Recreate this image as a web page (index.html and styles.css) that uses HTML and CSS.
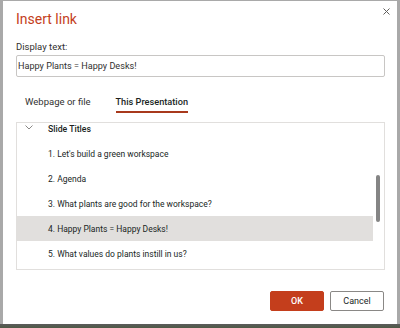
FILE: index.html
```html
<!DOCTYPE html>
<html>
<head>
<meta charset="utf-8">
<link rel="stylesheet" href="styles.css">
</head>
<body>
<div class="screen">
  <div class="dialog">
    <div class="head">
      <h1 class="title">Insert link</h1>
      <button class="close" aria-label="Close">
        <svg width="7" height="7" viewBox="0 0 7 7"><path d="M0.5 0.5L6.5 6.5M6.5 0.5L0.5 6.5" stroke="#605e5c" stroke-width="1" fill="none"/></svg>
      </button>
    </div>
    <div class="label">Display text:</div>
    <div class="input">Happy Plants = Happy Desks!</div>
    <div class="tabs">
      <span class="tab">Webpage or file</span>
      <span class="tab active">This Presentation</span>
    </div>
    <div class="list">
      <div class="list-view">
        <div class="list-content">
          <div class="row group"><svg class="chev" width="8" height="5" viewBox="0 0 8 5"><path d="M0.5 0.5L4 4L7.5 0.5" stroke="#8a8886" stroke-width="1" fill="none"/></svg><span>Slide Titles</span></div>
          <div class="row">1. Let's build a green workspace</div>
          <div class="row">2. Agenda</div>
          <div class="row">3. What plants are good for the workspace?</div>
          <div class="row selected">4. Happy Plants = Happy Desks!</div>
          <div class="row">5. What values do plants instill in us?</div>
        </div>
      </div>
      <div class="scroll-lane"><div class="thumb"></div></div>
    </div>
    <div class="actions">
      <button class="btn primary">OK</button>
      <button class="btn">Cancel</button>
    </div>
  </div>
</div>
</body>
</html>
```

FILE: styles.css
```css
html, body {
  margin: 0;
  padding: 0;
}
body {
  width: 400px;
  height: 328px;
  overflow: hidden;
  background: #a8a8a8;
  font-family: Roboto, "Noto Sans", sans-serif;
}
.screen {
  width: 400px;
  height: 328px;
  box-sizing: border-box;
  padding: 1px 3px 0 3px;
  background: linear-gradient(to bottom, #a9a9a9 0, #a9a9a9 324px, #5b5b5b 324px, #4f5a45 328px);
}
.dialog {
  width: 394px;
  height: 323px;
  box-sizing: border-box;
  background: #ffffff;
  padding: 8px 12px 0 13px;
  display: flex;
  flex-direction: column;
  color: #323130;
}
.head {
  display: flex;
  justify-content: space-between;
  align-items: flex-start;
}
.title {
  margin: 0;
  font-size: 14px;
  line-height: 20px;
  font-weight: 400;
  color: #c43e1c;
}
.close {
  margin: -1px -5px 0 0;
  padding: 0;
  border: 0;
  background: transparent;
  width: 7px;
  height: 7px;
  display: flex;
}
.label {
  margin-top: 11px;
  font-size: 9.5px;
  line-height: 14px;
  color: #323130;
}
.input {
  margin-top: 1px;
  height: 22px;
  box-sizing: border-box;
  border: 1px solid #c8c6c4;
  border-radius: 2px;
  padding: 0 0 0 1px;
  font-size: 9.1px;
  line-height: 20px;
  color: #323130;
}
.tabs {
  margin-top: 18px;
  display: flex;
  gap: 25px;
  padding-left: 9px;
}
.tab {
  font-size: 9.5px;
  line-height: 14px;
  padding-bottom: 2px;
  border-bottom: 2px solid transparent;
  color: #323130;
}
.tab.active {
  font-weight: 500;
  font-size: 9.2px;
  color: #201f1e;
  border-bottom-color: #a8391c;
}
.list {
  margin-top: 9px;
  height: 148px;
  box-sizing: border-box;
  border: 1px solid #e1dfdd;
  display: flex;
}
.list-view {
  flex: 1;
  overflow: hidden;
}
.list-content {
  margin-top: -7px;
}
.row {
  height: 25px;
  display: flex;
  align-items: center;
  padding-left: 31px;
  font-size: 8.5px;
  color: #201f1e;
}
.row.group {
  padding-left: 8px;
  font-weight: 500;
  font-size: 8.7px;
}
.chev {
  margin-right: 15px;
  margin-top: -3px;
}
.row.selected {
  background: #e1dfdd;
}
.scroll-lane {
  width: 11px;
  display: flex;
  flex-direction: column;
  padding-left: 3px;
  box-sizing: border-box;
}
.thumb {
  margin-top: 52px;
  width: 4px;
  height: 47px;
  border-radius: 2px;
  background: #858585;
}
.actions {
  margin-top: 21px;
  display: flex;
  justify-content: flex-end;
  gap: 6px;
  padding-right: 1px;
}
.btn {
  height: 20px;
  width: 54px;
  box-sizing: border-box;
  border: 1px solid #8a8886;
  border-radius: 2px;
  background: #ffffff;
  font-family: Roboto, "Noto Sans", sans-serif;
  font-size: 9px;
  color: #201f1e;
  padding: 0;
}
.btn.primary {
  background: #c43e1c;
  border-color: #c43e1c;
  color: #ffffff;
  font-weight: 500;
}
```
